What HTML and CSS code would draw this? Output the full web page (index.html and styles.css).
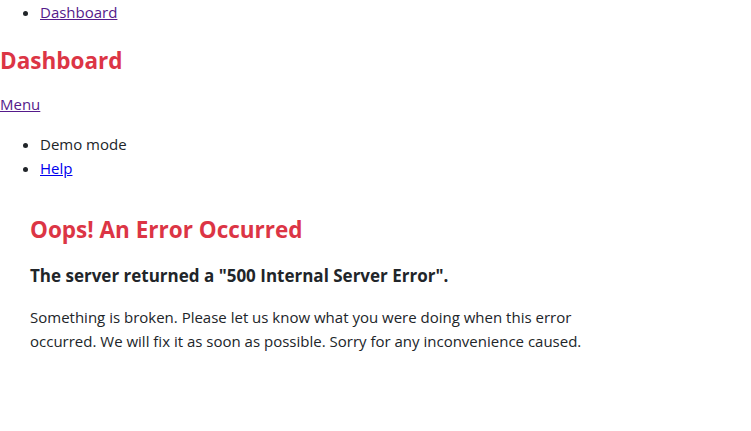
FILE: index.html
```html
<!DOCTYPE html>
<html lang="en">
<head>
<meta charset="utf-8">
<title>Dashboard</title>
<link rel="stylesheet" href="styles.css">
</head>
<body>
<ul class="list top-nav">
  <li><a href="#" class="visited">Dashboard</a></li>
</ul>
<h1 class="page-title">Dashboard</h1>
<p class="menu"><a href="#" class="visited">Menu</a></p>
<ul class="list">
  <li>Demo mode</li>
  <li><a href="#" class="link">Help</a></li>
</ul>
<div class="error-box">
  <h2 class="error-title">Oops! An Error Occurred</h2>
  <h3 class="error-sub">The server returned a "500 Internal Server Error".</h3>
  <p class="error-text">Something is broken. Please let us know what you were doing when this error occurred. We will fix it as soon as possible. Sorry for any inconvenience caused.</p>
</div>
</body>
</html>
```
FILE: styles.css
```css
html, body {
  margin: 0;
  padding: 0;
  background: #fff;
}
body {
  font-family: "Open Sans", "Noto Sans", sans-serif;
  font-size: 15px;
  line-height: 24px;
  color: #212529;
}
.list {
  margin: 0 0 16px 0;
  padding-left: 40px;
}
.visited {
  color: #551a8b;
}
.link {
  color: #0000ee;
}
.page-title {
  margin: 0 0 13px 0;
  padding-top: 3px;
  font-size: 22.5px;
  line-height: 36px;
  font-weight: 700;
  color: #dc3545;
}
.menu {
  margin: 0 0 16px 0;
}
.error-box {
  padding: 20px 30px;
  max-width: 560px;
}
.error-title {
  margin: 0 0 21px 0;
  font-size: 22.5px;
  line-height: 28px;
  font-weight: 700;
  color: #dc3545;
}
.error-sub {
  margin: 0 0 18px 0;
  font-size: 17px;
  line-height: 22px;
  font-weight: 700;
}
.error-text {
  margin: 0;
}
```
